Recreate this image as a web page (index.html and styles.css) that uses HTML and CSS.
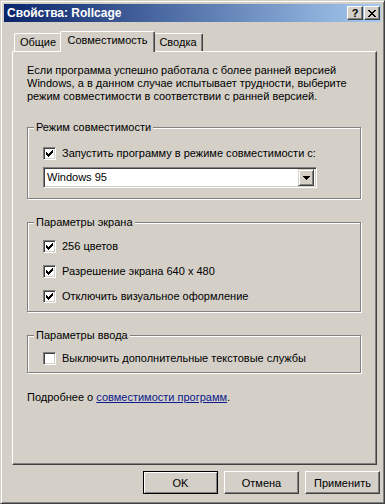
FILE: index.html
```html
<!DOCTYPE html>
<html lang="ru">
<head>
    <meta charset="UTF-8">
    <title>Свойства: Rollcage</title>
    <link rel="stylesheet" href="styles.css">
</head>
<body>
    <div class="window">
        <div class="titlebar">
            <span class="title">Свойства: Rollcage</span>
            <div class="caption-buttons">
                <span class="cbtn">?</span>
                <span class="cbtn close">
                    <svg width="8" height="7" viewBox="0 0 8 7" shape-rendering="crispEdges">
                        <path d="M0 0h2v1h-2z M6 0h2v1h-2z M1 1h2v1h-2z M5 1h2v1h-2z M2 2h4v1h-4z M3 3h2v1h-2z M2 4h4v1h-4z M1 5h2v1h-2z M5 5h2v1h-2z M0 6h2v1h-2z M6 6h2v1h-2z" fill="#000"/>
                    </svg>
                </span>
            </div>
        </div>

        <div class="client">
            <div class="tabs">
                <div class="tab tab-general">Общие</div>
                <div class="tab tab-compat active">Совместимость</div>
                <div class="tab tab-summary">Сводка</div>
            </div>

            <div class="panel">
                <p class="intro">Если программа успешно работала с более ранней версией Windows, а в данном случае испытывает трудности, выберите режим совместимости в соответствии с ранней версией.</p>

                <div class="group group-mode">
                    <div class="group-title"><span>Режим совместимости</span></div>
                    <label class="check first">
                        <span class="box checked">
                            <svg width="7" height="7" viewBox="0 0 7 7" shape-rendering="crispEdges"><path d="M0 2h1v3h-1z M1 3h1v3h-1z M2 4h1v3h-1z M3 3h1v3h-1z M4 2h1v3h-1z M5 1h1v3h-1z M6 0h1v3h-1z" fill="#000"/></svg>
                        </span>
                        Запустить программу в режиме совместимости с:
                    </label>
                    <div class="select">
                        <span class="select-value">Windows 95</span>
                        <span class="select-btn">
                            <svg width="7" height="4" viewBox="0 0 7 4" shape-rendering="crispEdges"><path d="M0 0h7v1h-7z M1 1h5v1h-5z M2 2h3v1h-3z M3 3h1v1h-1z" fill="#000"/></svg>
                        </span>
                    </div>
                </div>

                <div class="group group-screen">
                    <div class="group-title"><span>Параметры экрана</span></div>
                    <label class="check first">
                        <span class="box checked">
                            <svg width="7" height="7" viewBox="0 0 7 7" shape-rendering="crispEdges"><path d="M0 2h1v3h-1z M1 3h1v3h-1z M2 4h1v3h-1z M3 3h1v3h-1z M4 2h1v3h-1z M5 1h1v3h-1z M6 0h1v3h-1z" fill="#000"/></svg>
                        </span>
                        256 цветов
                    </label>
                    <label class="check">
                        <span class="box checked">
                            <svg width="7" height="7" viewBox="0 0 7 7" shape-rendering="crispEdges"><path d="M0 2h1v3h-1z M1 3h1v3h-1z M2 4h1v3h-1z M3 3h1v3h-1z M4 2h1v3h-1z M5 1h1v3h-1z M6 0h1v3h-1z" fill="#000"/></svg>
                        </span>
                        Разрешение экрана 640 x 480
                    </label>
                    <label class="check">
                        <span class="box checked">
                            <svg width="7" height="7" viewBox="0 0 7 7" shape-rendering="crispEdges"><path d="M0 2h1v3h-1z M1 3h1v3h-1z M2 4h1v3h-1z M3 3h1v3h-1z M4 2h1v3h-1z M5 1h1v3h-1z M6 0h1v3h-1z" fill="#000"/></svg>
                        </span>
                        Отключить визуальное оформление
                    </label>
                </div>

                <div class="group group-input">
                    <div class="group-title"><span>Параметры ввода</span></div>
                    <label class="check first">
                        <span class="box"></span>
                        Выключить дополнительные текстовые службы
                    </label>
                </div>

                <p class="more">Подробнее о <a href="#">совместимости программ</a>.</p>
            </div>

            <div class="buttons">
                <button class="btn default">OK</button>
                <button class="btn">Отмена</button>
                <button class="btn">Применить</button>
            </div>
        </div>
    </div>
</body>
</html>
```

FILE: styles.css
```css
:root {
    --face: #d4d0c8;
    --shadow: #808080;
    --dark: #404040;
    --light: #ffffff;
    --text: #000000;
    --link: #0b1a8c;
}

* {
    box-sizing: border-box;
    margin: 0;
    padding: 0;
}

body {
    font-family: 'Liberation Sans', Arial, sans-serif;
    font-size: 11px;
    line-height: 13px;
    color: var(--text);
    background-color: var(--face);
}

.window {
    width: 385px;
    height: 504px;
    padding: 3px;
    background-color: var(--face);
    border: 1px solid;
    border-color: var(--face) var(--dark) var(--dark) var(--face);
    box-shadow: inset 1px 1px 0 var(--light), inset -1px -1px 0 var(--shadow);
}

/* Заголовок окна */
.titlebar {
    height: 18px;
    display: flex;
    align-items: center;
    justify-content: space-between;
    padding-left: 3px;
    background: linear-gradient(to right, #0a246a, #a6caf0);
}

.title {
    color: #fff;
    font-weight: bold;
    font-size: 12px;
}

.caption-buttons {
    display: flex;
    gap: 1px;
    margin-right: 1px;
}

.cbtn {
    width: 16px;
    height: 14px;
    display: flex;
    align-items: center;
    justify-content: center;
    background-color: var(--face);
    border: 1px solid;
    border-color: var(--light) var(--dark) var(--dark) var(--light);
    box-shadow: inset -1px -1px 0 var(--shadow);
    font-weight: bold;
    font-size: 11px;
    line-height: 12px;
}

/* Вкладки */
.client {
    padding-top: 9px;
}

.tabs {
    display: flex;
    align-items: flex-end;
    height: 20px;
    padding-left: 10px;
}

.tab {
    height: 18px;
    text-align: center;
    line-height: 17px;
    background-color: var(--face);
    border-top: 1px solid var(--light);
    border-left: 1px solid var(--light);
    border-right: 1px solid var(--dark);
    border-radius: 2px 2px 0 0;
    box-shadow: inset -1px 0 0 var(--shadow);
}

.tab-general { width: 48px; }
.tab-compat { width: 91px; }
.tab-summary { width: 50px; }

.tab.active {
    position: relative;
    z-index: 1;
    width: 95px;
    height: 21px;
    margin: 0 -2px -1px;
    line-height: 17px;
}

/* Панель */
.panel {
    margin-left: 8px;
    width: 365px;
    height: 414px;
    padding: 12px 15px 0 14px;
    border: 1px solid;
    border-color: var(--light) var(--dark) var(--dark) var(--light);
    box-shadow: inset -1px -1px 0 var(--shadow);
}

.intro {
    width: 320px;
}

.group {
    margin-top: 24px;
    border: 1px solid var(--shadow);
    box-shadow: inset 1px 1px 0 var(--light), 1px 1px 0 var(--light);
    padding: 0 15px;
}

.group + .group {
    margin-top: 23px;
}

.group-title {
    margin: -7px 0 0 -9px;
}

.group-title span {
    display: inline-block;
    padding: 0 2px;
    background-color: var(--face);
}

.check {
    display: flex;
    align-items: center;
    gap: 6px;
    height: 13px;
    margin-top: 12px;
}

.check.first {
    margin-top: 13px;
}

.group-screen .check.first {
    margin-top: 11px;
}

.group-input .check.first {
    margin-top: 10px;
}

.box {
    width: 13px;
    height: 13px;
    padding: 2px;
    flex-shrink: 0;
    background-color: #fff;
    border: 1px solid;
    border-color: var(--shadow) var(--light) var(--light) var(--shadow);
    box-shadow: inset 1px 1px 0 var(--dark), inset -1px -1px 0 var(--face);
}

.box svg {
    display: block;
}

.group-mode {
    padding-bottom: 10px;
}

.group-screen {
    padding-bottom: 8px;
}

.group-input {
    padding-bottom: 7px;
}

/* Выпадающий список */
.select {
    display: flex;
    align-items: center;
    justify-content: space-between;
    width: 274px;
    height: 21px;
    margin-top: 7px;
    padding: 2px;
    background-color: #fff;
    border: 1px solid;
    border-color: var(--shadow) var(--light) var(--light) var(--shadow);
    box-shadow: inset 1px 1px 0 var(--dark), inset -1px -1px 0 var(--face);
}

.select-value {
    padding-left: 1px;
}

.select-btn {
    width: 16px;
    height: 17px;
    display: flex;
    align-items: center;
    justify-content: center;
    background-color: var(--face);
    border: 1px solid;
    border-color: var(--face) var(--dark) var(--dark) var(--face);
    box-shadow: inset 1px 1px 0 var(--light), inset -1px -1px 0 var(--shadow);
}

.more {
    margin-top: 18px;
}

.more a {
    color: var(--link);
    text-decoration: underline;
}

/* Кнопки */
.buttons {
    display: flex;
    justify-content: flex-end;
    gap: 6px;
    width: 376px;
    margin-top: 6px;
}

.btn {
    width: 75px;
    height: 23px;
    font-family: inherit;
    font-size: 11px;
    color: var(--text);
    background-color: var(--face);
    border: 1px solid;
    border-color: var(--light) var(--dark) var(--dark) var(--light);
    box-shadow: inset -1px -1px 0 var(--shadow);
}

.btn.default {
    border-color: #000;
    box-shadow: inset 1px 1px 0 var(--light), inset -1px -1px 0 var(--shadow);
}
```
